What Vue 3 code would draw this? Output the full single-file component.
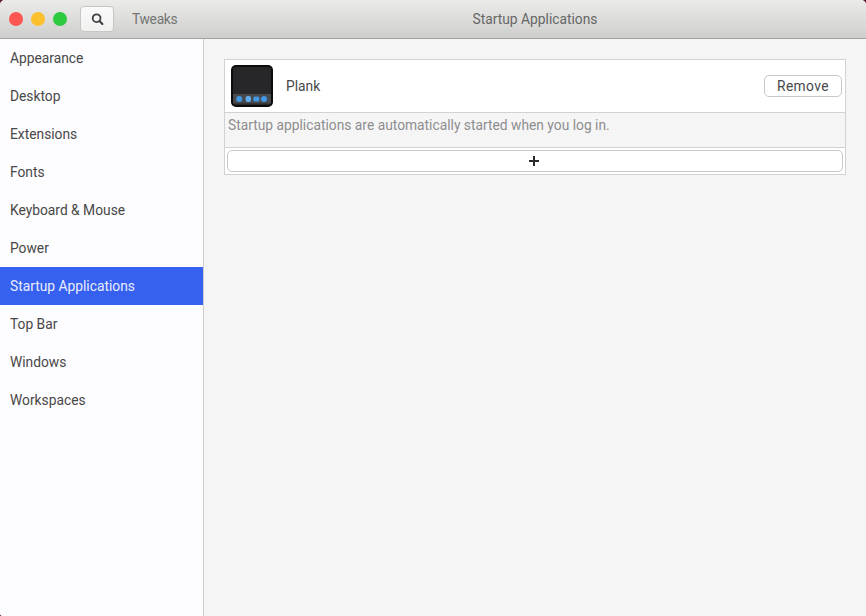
<script setup>
const items = ['Appearance', 'Desktop', 'Extensions', 'Fonts', 'Keyboard & Mouse', 'Power', 'Startup Applications', 'Top Bar', 'Windows', 'Workspaces']
const active = 'Startup Applications'
</script>

<template>
  <div class="window">
    <header class="titlebar">
      <div class="left-bar">
        <div class="lights">
          <span class="light red"></span>
          <span class="light yellow"></span>
          <span class="light green"></span>
        </div>
        <button class="search" aria-label="Search">
          <svg width="13" height="13" viewBox="0 0 13 13" fill="none">
            <circle cx="5.6" cy="5.2" r="3.9" stroke="#3f3f3f" stroke-width="1.8" />
            <path d="M8.5 8.1 L11.4 11" stroke="#3f3f3f" stroke-width="2.1" stroke-linecap="round" />
          </svg>
        </button>
        <span class="app-name">Tweaks</span>
      </div>
      <div class="page-title">Startup Applications</div>
    </header>
    <div class="body">
      <nav class="sidebar">
        <div v-for="item in items" :key="item" class="nav-item" :class="{ active: item === active }">{{ item }}</div>
      </nav>
      <main class="content">
        <section class="frame">
          <div class="app-row">
            <svg class="plank" width="42" height="42" viewBox="0 0 42 42">
              <rect x="0" y="0" width="42" height="42" rx="5" fill="#0b0b0c" />
              <rect x="2" y="2" width="38" height="38" rx="2.5" fill="#272729" />
              <rect x="2" y="29" width="38" height="9.5" fill="#47494c" />
              <circle cx="8.2" cy="34" r="3" fill="#4197e2" />
              <rect x="14.6" y="31" width="5.4" height="6" rx="2" fill="#62ade9" />
              <rect x="22.4" y="31.4" width="6" height="5.2" rx="1.6" fill="#4197e2" />
              <circle cx="33" cy="34" r="3" fill="#4197e2" />
            </svg>
            <span class="app-label">Plank</span>
            <button class="remove">Remove</button>
          </div>
          <div class="note">Startup applications are automatically started when you log in.</div>
          <div class="add-row">
            <button class="add" aria-label="Add">
              <svg width="10" height="10" viewBox="0 0 10 10">
                <path d="M5 0 V10 M0 5 H10" stroke="#2a2a2a" stroke-width="2" />
              </svg>
            </button>
          </div>
        </section>
      </main>
    </div>
  </div>
</template>

<style>
html, body {
  margin: 0;
  background: #5e1a34;
}
</style>

<style scoped>
.window {
  width: 866px;
  height: 616px;
  display: flex;
  flex-direction: column;
  overflow: hidden;
  border-radius: 5px 5px 0 3px;
  font-family: Roboto, "Liberation Sans", sans-serif;
  font-size: 13.8px;
  color: #484848;
  background: #f6f5f6;
}
.titlebar {
  height: 38px;
  flex: none;
  display: flex;
  background: linear-gradient(#ebebe9, #cecfcd);
  border-bottom: 1px solid #a3a3a3;
}
.left-bar {
  width: 204px;
  flex: none;
  display: flex;
  align-items: center;
  padding-left: 9px;
  box-sizing: border-box;
}
.lights {
  display: flex;
  gap: 8px;
}
.light {
  width: 14px;
  height: 14px;
  border-radius: 50%;
}
.red { background: #fb5650; }
.yellow { background: #fdc02d; }
.green { background: #2cc941; }
.search {
  width: 34px;
  height: 26px;
  margin-left: 13px;
  padding: 0;
  display: flex;
  align-items: center;
  justify-content: center;
  background: linear-gradient(#fafafa, #f1f1f0);
  border: 1px solid #c6c6c6;
  border-radius: 4px;
}
.app-name {
  margin-left: 18px;
  letter-spacing: -0.3px;
  color: #747474;
}
.page-title {
  flex: 1;
  text-align: center;
  line-height: 38px;
  color: #666;
}
.body {
  flex: 1;
  display: flex;
  min-height: 0;
}
.sidebar {
  width: 203px;
  flex: none;
  background: #fdfcfe;
  border-right: 1px solid #cfcdd0;
}
.nav-item {
  height: 38px;
  line-height: 38px;
  padding-left: 10px;
}
.nav-item.active {
  background: #3560f0;
  color: #e9edfd;
}
.content {
  flex: 1;
  padding: 20px 20px 0;
}
.frame {
  border: 1px solid #d2d1d3;
}
.app-row {
  height: 52px;
  display: flex;
  align-items: center;
  padding: 0 3px 0 6px;
  background: #fff;
  border-bottom: 1px solid #d2d1d3;
}
.plank {
  flex: none;
}
.app-label {
  margin-left: 13px;
  flex: 1;
}
.remove {
  width: 78px;
  height: 22px;
  padding: 0;
  font: inherit;
  letter-spacing: 0.4px;
  color: #484848;
  background: #fff;
  border: 1px solid #c8c8c8;
  border-radius: 5px;
}
.note {
  height: 34px;
  line-height: 24px;
  padding-left: 3px;
  color: #8d8d8f;
  border-bottom: 1px solid #d2d1d3;
}
.add-row {
  height: 26px;
  padding: 2px;
  box-sizing: border-box;
  background: #fff;
}
.add {
  display: flex;
  align-items: center;
  justify-content: center;
  width: 100%;
  height: 22px;
  padding: 0 2px 0 0;
  background: #fff;
  border: 1px solid #c8c8c8;
  border-radius: 5px;
}
</style>
